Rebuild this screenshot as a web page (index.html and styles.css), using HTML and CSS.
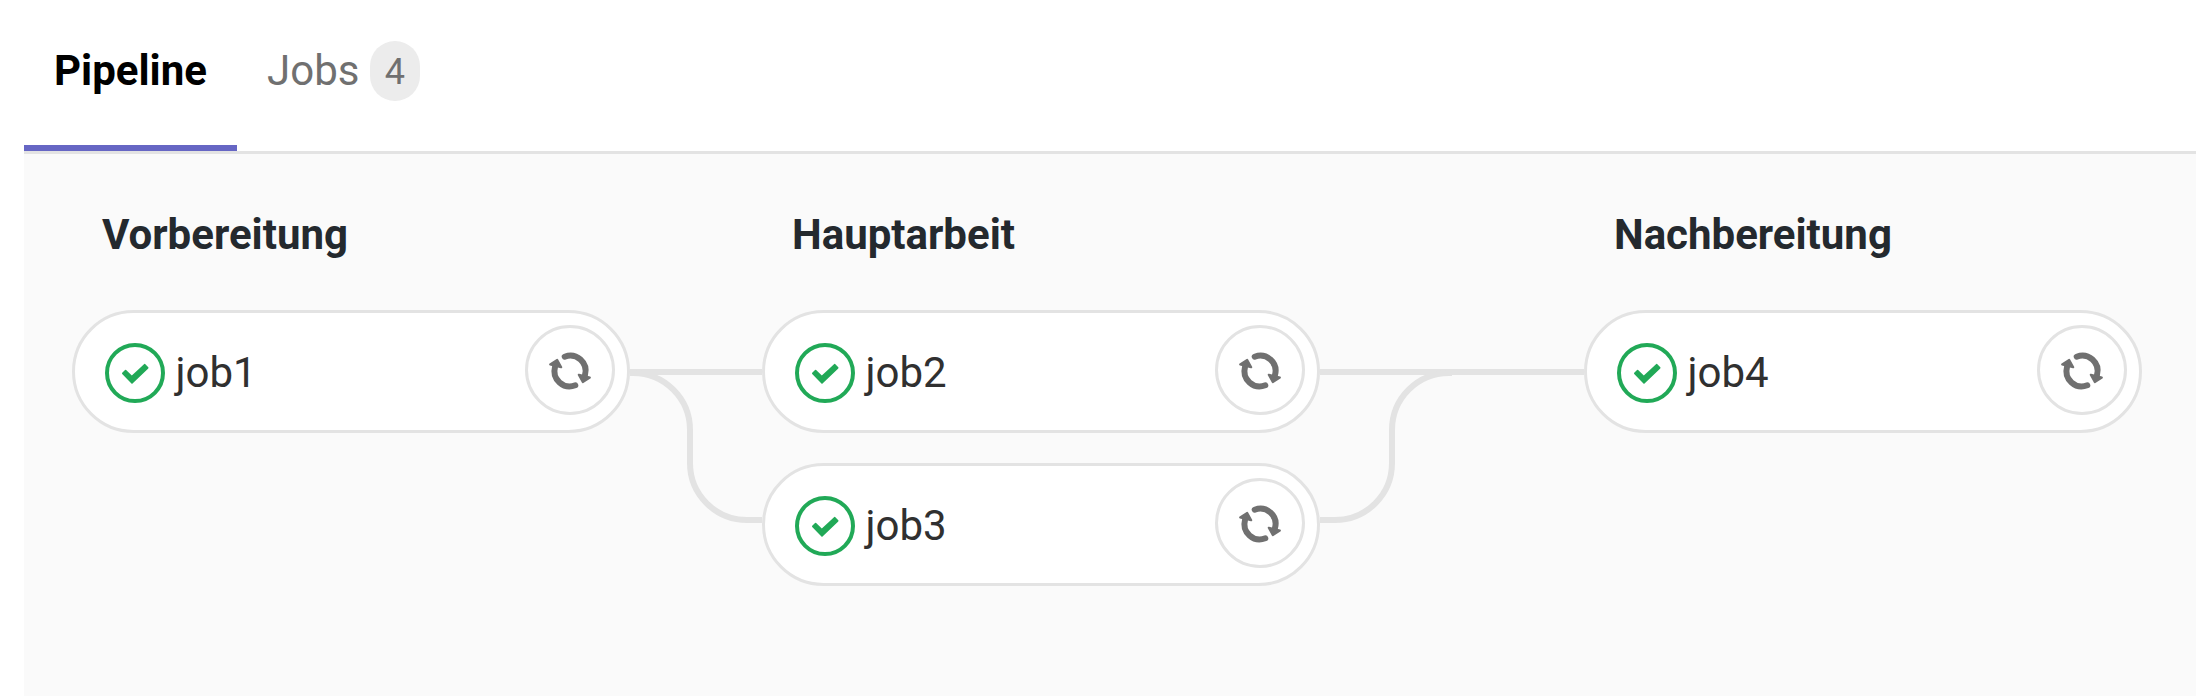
FILE: index.html
```html
<!DOCTYPE html>
<html lang="de">
<head>
<meta charset="utf-8">
<title>Pipeline</title>
<link rel="stylesheet" href="styles.css">
</head>
<body>
<svg class="sprite" width="0" height="0" aria-hidden="true">
  <symbol id="status-success" viewBox="0 0 60 60">
    <circle cx="30" cy="30" r="28" fill="none" stroke="currentColor" stroke-width="4"/>
    <path d="M17.8 30.4 20.6 27.6 26.8 33.6 39.8 21.7 42.7 24.9 27 40Z" fill="currentColor" stroke="currentColor" stroke-width="1.6" stroke-linejoin="round"/>
  </symbol>
  <symbol id="retry" viewBox="-22 -22 44 44">
    <g id="retry-half">
      <path d="M-5.3 -14.3A15.3 15.3 0 0 1 15 4" fill="none" stroke="currentColor" stroke-width="6" stroke-linecap="round"/>
      <path d="M8.8 3.8 19.8 6.6 12.8 11Z" fill="currentColor" stroke="currentColor" stroke-width="2.2" stroke-linejoin="round"/>
    </g>
    <use href="#retry-half" transform="rotate(180)"/>
  </symbol>
</svg>

<main class="page">
  <nav class="tabs">
    <a class="tab tab-active">Pipeline</a>
    <a class="tab">Jobs<span class="badge">4</span></a>
  </nav>

  <section class="graph">
    <div class="stage">
      <h2 class="stage-title">Vorbereitung</h2>
      <div class="job">
        <svg class="status"><use href="#status-success"/></svg>
        <span class="job-name">job1</span>
        <button class="retry" aria-label="Retry"><svg class="retry-icon"><use href="#retry"/></svg></button>
      </div>
    </div>

    <svg class="links" width="132" height="276" viewBox="0 0 132 276">
      <path d="M0 62H132"/>
      <path d="M0 63H3A57 57 0 0 1 60 120V153A57 57 0 0 0 117 210H132"/>
    </svg>

    <div class="stage">
      <h2 class="stage-title">Hauptarbeit</h2>
      <div class="job">
        <svg class="status"><use href="#status-success"/></svg>
        <span class="job-name">job2</span>
        <button class="retry" aria-label="Retry"><svg class="retry-icon"><use href="#retry"/></svg></button>
      </div>
      <div class="job">
        <svg class="status"><use href="#status-success"/></svg>
        <span class="job-name">job3</span>
        <button class="retry" aria-label="Retry"><svg class="retry-icon"><use href="#retry"/></svg></button>
      </div>
    </div>

    <svg class="links" width="264" height="276" viewBox="0 0 264 276">
      <path d="M0 62H264"/>
      <path d="M0 210H15A57 57 0 0 0 72 153V120A57 57 0 0 1 129 63H132"/>
    </svg>

    <div class="stage">
      <h2 class="stage-title">Nachbereitung</h2>
      <div class="job">
        <svg class="status"><use href="#status-success"/></svg>
        <span class="job-name">job4</span>
        <button class="retry" aria-label="Retry"><svg class="retry-icon"><use href="#retry"/></svg></button>
      </div>
    </div>
  </section>
</main>
</body>
</html>
```
FILE: styles.css
```css
* {
  box-sizing: border-box;
}

body {
  margin: 0;
  background: #fff;
  font-family: Roboto, "Noto Sans", sans-serif;
  font-size: 42px;
  line-height: 60px;
  overflow: hidden;
}

.sprite {
  position: absolute;
}

.page {
  display: flex;
  flex-direction: column;
  height: 696px;
  padding-left: 24px;
}

.tabs {
  display: flex;
  height: 154px;
  border-bottom: 3px solid #e3e3e3;
}

.tab {
  display: flex;
  align-items: flex-start;
  padding: 41px 30px 0;
  color: #707070;
}

.tab-active {
  width: 213px;
  border-bottom: 6px solid #6666c4;
  color: #000;
  font-weight: 700;
}

.badge {
  width: 50px;
  height: 60px;
  margin-left: 10.6px;
  border-radius: 30px;
  background: #ececec;
  font-size: 36px;
  line-height: 63px;
  text-align: center;
}

.graph {
  display: flex;
  flex: 1;
  align-items: flex-start;
  padding: 51px 0 0 48px;
  background: #fafafa;
}

.stage {
  display: flex;
  flex: none;
  flex-direction: column;
  gap: 30px;
  width: 558px;
}

.stage-title {
  margin: 0 0 15px;
  padding-left: 30px;
  color: #24292e;
  font-size: 42px;
  font-weight: 700;
  line-height: 60px;
}

.job {
  display: flex;
  align-items: flex-start;
  height: 123px;
  padding: 12px 12px 0 30px;
  border: 3px solid #e3e3e3;
  border-radius: 62px;
  background: #fff;
  color: #303030;
}

.status {
  width: 60px;
  height: 60px;
  margin-top: 18px;
  color: #21a957;
}

.job-name {
  flex: 1;
  margin: 18px 0 0 10.5px;
}

.retry {
  display: flex;
  align-items: center;
  justify-content: center;
  width: 90px;
  height: 90px;
  padding: 2px 0 0;
  border: 3px solid #e3e3e3;
  border-radius: 50%;
  background: #fff;
  color: #707070;
}

.retry-icon {
  width: 44px;
  height: 44px;
}

.links {
  flex: none;
  margin-top: 105px;
  fill: none;
  stroke: #e3e3e3;
  stroke-width: 6px;
}
```
